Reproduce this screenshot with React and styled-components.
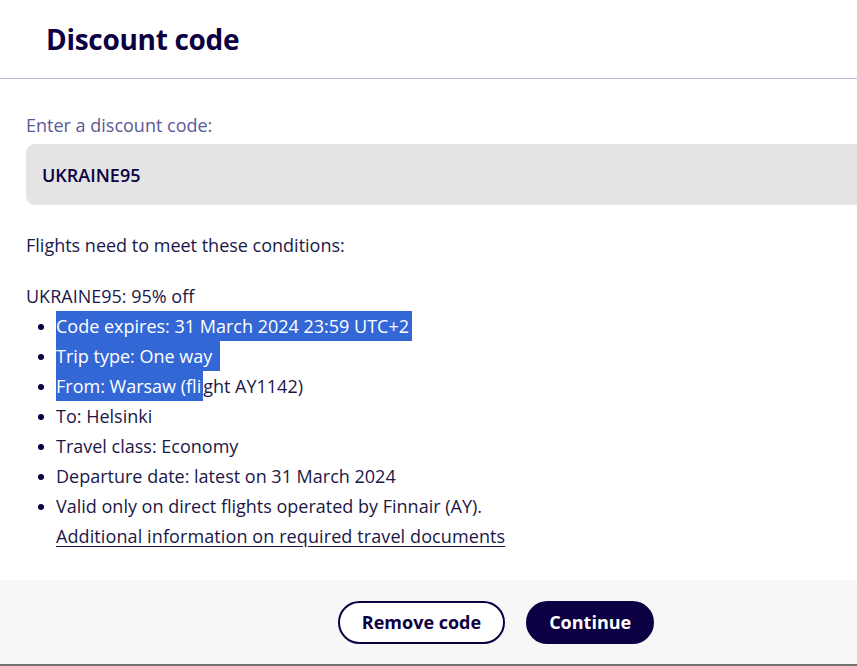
import React from "react";
import styled, { createGlobalStyle } from "styled-components";

const Global = createGlobalStyle`
  html, body { margin: 0; padding: 0; background: #fff; }
  body { font-family: "Open Sans", "Noto Sans", sans-serif; color: #1b1848; }
`;

const Viewport = styled.div`
  width: 100vw;
  height: 100vh;
  overflow: hidden;
`;

const Dialog = styled.div`
  width: 992px;
  height: 666px;
  display: flex;
  flex-direction: column;
`;

const Header = styled.header`
  height: 78px;
  display: flex;
  align-items: center;
  padding-left: 46px;
  border-bottom: 1px solid #bdb9dc;
`;

const Title = styled.h1`
  margin: 0;
  font-size: 28px;
  font-weight: 700;
  color: #0c0042;
  letter-spacing: -0.3px;
`;

const Body = styled.div`
  padding: 34px 26px 0;
  flex: 1;
`;

const Label = styled.div`
  font-size: 18px;
  line-height: 24px;
  color: #5b5996;
`;

const Input = styled.div`
  margin-top: 7px;
  height: 61px;
  background: #e4e4e4;
  border-radius: 9px;
  display: flex;
  align-items: center;
  padding-left: 16px;
  font-size: 18px;
  font-weight: 600;
  color: #0c0042;
`;

const Para = styled.p`
  margin: ${(p) => p.$mt || 0}px 0 0;
  font-size: 18px;
  line-height: ${(p) => p.$lh || 24}px;
`;

const List = styled.ul`
  margin: 0;
  padding-left: 30px;
  list-style: none;
`;

const Item = styled.li`
  position: relative;
  height: 30px;
  line-height: 30px;
  font-size: 18px;
  &::before {
    content: "";
    position: absolute;
    left: -18px;
    top: 13px;
    width: 6px;
    height: 6px;
    border-radius: 50%;
    background: #0c0042;
  }
`;

const Sel = styled.span`
  display: inline-block;
  height: 30px;
  background: #3367d6;
  color: #fff;
  padding-right: ${(p) => p.$pr || 0}px;
`;

const Link = styled.a`
  display: block;
  height: 30px;
  line-height: 30px;
  font-size: 18px;
  letter-spacing: 0.1px;
  color: #1b1848;
  text-decoration: underline;
  text-underline-offset: 3px;
`;

const Footer = styled.footer`
  height: 84px;
  background: #f7f7f7;
  border-bottom: 2px solid #707070;
  display: flex;
  align-items: center;
  justify-content: center;
  gap: 21px;
`;

const Button = styled.button`
  height: 43px;
  box-sizing: border-box;
  padding: 0 ${(p) => (p.$primary ? 21 : 22)}px;
  border-radius: 22px;
  border: 2px solid #0c0042;
  background: ${(p) => (p.$primary ? "#0c0042" : "#fff")};
  color: ${(p) => (p.$primary ? "#fff" : "#0c0042")};
  font-family: "Open Sans", sans-serif;
  font-size: 18px;
  font-weight: 700;
  cursor: pointer;
`;

export default function App() {
  return (
    <Viewport>
      <Global />
      <Dialog>
        <Header>
          <Title>Discount code</Title>
        </Header>
        <Body>
          <Label>Enter a discount code:</Label>
          <Input>UKRAINE95</Input>
          <Para $mt={28}>Flights need to meet these conditions:</Para>
          <Para $mt={24} $lh={30}>UKRAINE95: 95% off</Para>
          <List>
            <Item><Sel $pr={3}>Code expires: 31 March 2024 23:59 UTC+2</Sel></Item>
            <Item><Sel $pr={8}>Trip type: One way</Sel></Item>
            <Item><Sel $pr={2}>From: Warsaw (fli</Sel>ght AY1142)</Item>
            <Item>To: Helsinki</Item>
            <Item>Travel class: Economy</Item>
            <Item>Departure date: latest on 31 March 2024</Item>
            <Item>Valid only on direct flights operated by Finnair (AY).</Item>
            <Link href="#">Additional information on required travel documents</Link>
          </List>
        </Body>
        <Footer>
          <Button>Remove code</Button>
          <Button $primary>Continue</Button>
        </Footer>
      </Dialog>
    </Viewport>
  );
}
